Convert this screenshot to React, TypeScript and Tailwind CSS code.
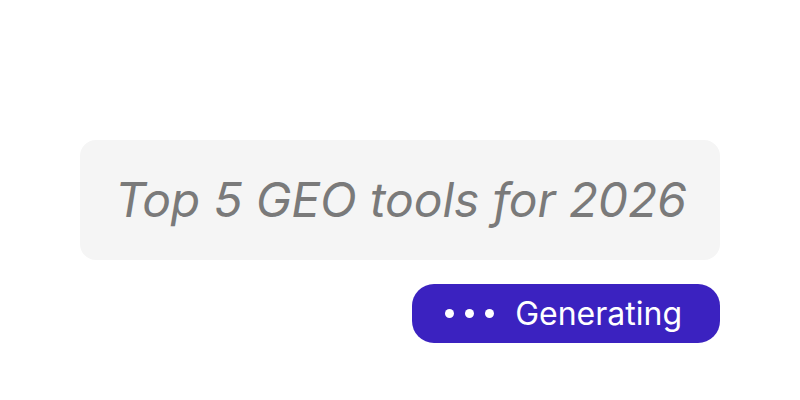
export default function App() {
  return (
    <div className="w-[800px] h-[400px] bg-white flex flex-col items-end pt-[140px] px-[80px] font-['Inter',sans-serif]">
      {/* Prompt */}
      <div className="w-full h-[120px] bg-[#f5f5f5] rounded-[16px] flex items-center pl-[35px] pr-[30px]">
        <p className="text-[48px] italic text-[#7a7a7a] leading-none whitespace-nowrap tracking-[-0.15px]">
          Top 5 GEO tools for 2026
        </p>
      </div>

      {/* Status pill */}
      <div className="mt-[24px] h-[59px] w-[308px] bg-[#3b22c0] rounded-[22px] flex items-center justify-end pr-[38px] gap-[21px]">
        <span className="flex items-center gap-[11px]">
          <span className="w-[9px] h-[9px] rounded-full bg-white" />
          <span className="w-[9px] h-[9px] rounded-full bg-white" />
          <span className="w-[9px] h-[9px] rounded-full bg-white" />
        </span>
        <span className="text-[32px] text-white leading-none">Generating</span>
      </div>
    </div>
  );
}
